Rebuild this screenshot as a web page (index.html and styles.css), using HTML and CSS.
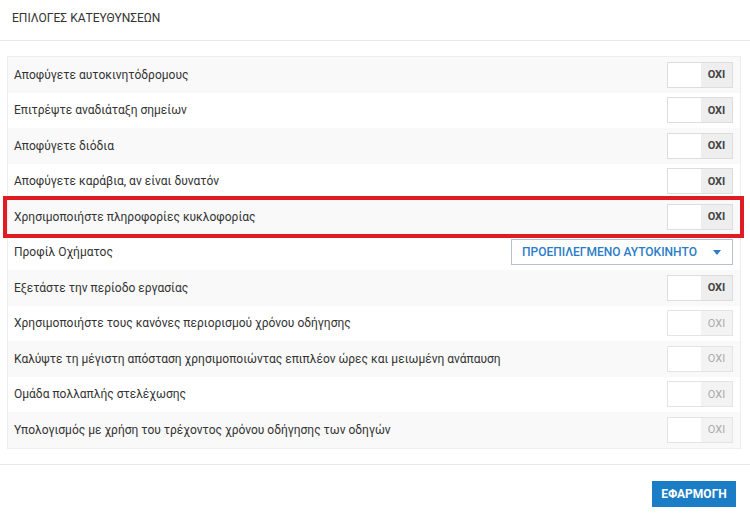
FILE: index.html
```html
<!DOCTYPE html>
<html lang="el">
<head>
<meta charset="utf-8">
<link rel="stylesheet" href="styles.css">
</head>
<body>
<div class="header">ΕΠΙΛΟΓΕΣ ΚΑΤΕΥΘΥΝΣΕΩΝ</div>
<div class="panel">
  <div class="row"><span>Αποφύγετε αυτοκινητόδρομους</span><span class="toggle"><span class="off"></span><span class="lbl">ΟΧΙ</span></span></div>
  <div class="row"><span>Επιτρέψτε αναδιάταξη σημείων</span><span class="toggle"><span class="off"></span><span class="lbl">ΟΧΙ</span></span></div>
  <div class="row"><span>Αποφύγετε διόδια</span><span class="toggle"><span class="off"></span><span class="lbl">ΟΧΙ</span></span></div>
  <div class="row"><span>Αποφύγετε καράβια, αν είναι δυνατόν</span><span class="toggle"><span class="off"></span><span class="lbl">ΟΧΙ</span></span></div>
  <div class="row highlighted"><span>Χρησιμοποιήστε πληροφορίες κυκλοφορίας</span><span class="toggle"><span class="off"></span><span class="lbl">ΟΧΙ</span></span><span class="redbox"></span></div>
  <div class="row"><span>Προφίλ Οχήματος</span><span class="select">ΠΡΟΕΠΙΛΕΓΜΕΝΟ ΑΥΤΟΚΙΝΗΤΟ<svg class="caret" width="8" height="5" viewBox="0 0 8 5"><path d="M0 0h8L4 5z" fill="#2a7cc7"/></svg></span></div>
  <div class="row"><span>Εξετάστε την περίοδο εργασίας</span><span class="toggle"><span class="off"></span><span class="lbl">ΟΧΙ</span></span></div>
  <div class="row"><span>Χρησιμοποιήστε τους κανόνες περιορισμού χρόνου οδήγησης</span><span class="toggle disabled"><span class="off"></span><span class="lbl">ΟΧΙ</span></span></div>
  <div class="row"><span>Καλύψτε τη μέγιστη απόσταση χρησιμοποιώντας επιπλέον ώρες και μειωμένη ανάπαυση</span><span class="toggle disabled"><span class="off"></span><span class="lbl">ΟΧΙ</span></span></div>
  <div class="row"><span>Ομάδα πολλαπλής στελέχωσης</span><span class="toggle disabled"><span class="off"></span><span class="lbl">ΟΧΙ</span></span></div>
  <div class="row"><span>Υπολογισμός με χρήση του τρέχοντος χρόνου οδήγησης των οδηγών</span><span class="toggle disabled"><span class="off"></span><span class="lbl">ΟΧΙ</span></span></div>
</div>
<div class="footer"><button class="apply">ΕΦΑΡΜΟΓΗ</button></div>
</body>
</html>
```
FILE: styles.css
```css
* { box-sizing: border-box; }
body {
  margin: 0;
  background: #fff;
  font-family: Roboto, "Liberation Sans", Arial, sans-serif;
  font-size: 12px;
  color: #333;
}
.header {
  height: 41px;
  padding: 11px 0 0 12px;
  font-size: 12px;
  color: #333;
  border-bottom: 1px solid #e8e8e8;
}
.panel {
  margin: 15px 9px 0 7px;
  border: 1px solid #eee;
}
.row {
  position: relative;
  height: 35.5px;
  display: flex;
  align-items: center;
  justify-content: space-between;
  padding: 0 7px 0 6px;
  background: #fff;
}
.row:nth-child(odd) { background: #f9f9f9; }
.highlighted { z-index: 2; }
.toggle {
  display: flex;
  width: 66px;
  height: 26px;
  border: 1px solid #ddd;
  background: #fff;
}
.toggle .off { width: 33px; background: #fff; }
.toggle .lbl {
  flex: 1;
  background: #eee;
  display: flex;
  align-items: center;
  justify-content: center;
  font-size: 11px;
  font-weight: 700;
  color: #444;
}
.toggle.disabled { border-color: #e4e4e4; }
.toggle.disabled .lbl { background: #f3f3f3; color: #aaa; font-weight: 400; }
.redbox {
  position: absolute;
  left: -5px;
  right: -4px;
  top: -3px;
  bottom: -3px;
  border: 4px solid #e11b22;
  pointer-events: none;
}
.select {
  width: 222px;
  height: 26px;
  border: 1px solid #b8c2cc;
  display: flex;
  align-items: center;
  justify-content: space-between;
  padding: 0 11px 0 10px;
  font-size: 12px;
  font-weight: 500;
  color: #2a7cc7;
  background: #fff;
}
.footer {
  margin-top: 15px;
  border-top: 1px solid #e8e8e8;
  display: flex;
  justify-content: flex-end;
  padding: 16px 14px 0 0;
}
.apply {
  width: 84px;
  height: 26px;
  border: none;
  background: #1a7dc6;
  color: #fff;
  font-family: Roboto, "Liberation Sans", Arial, sans-serif;
  font-size: 12px;
  font-weight: 700;
  padding: 0;
}
```
